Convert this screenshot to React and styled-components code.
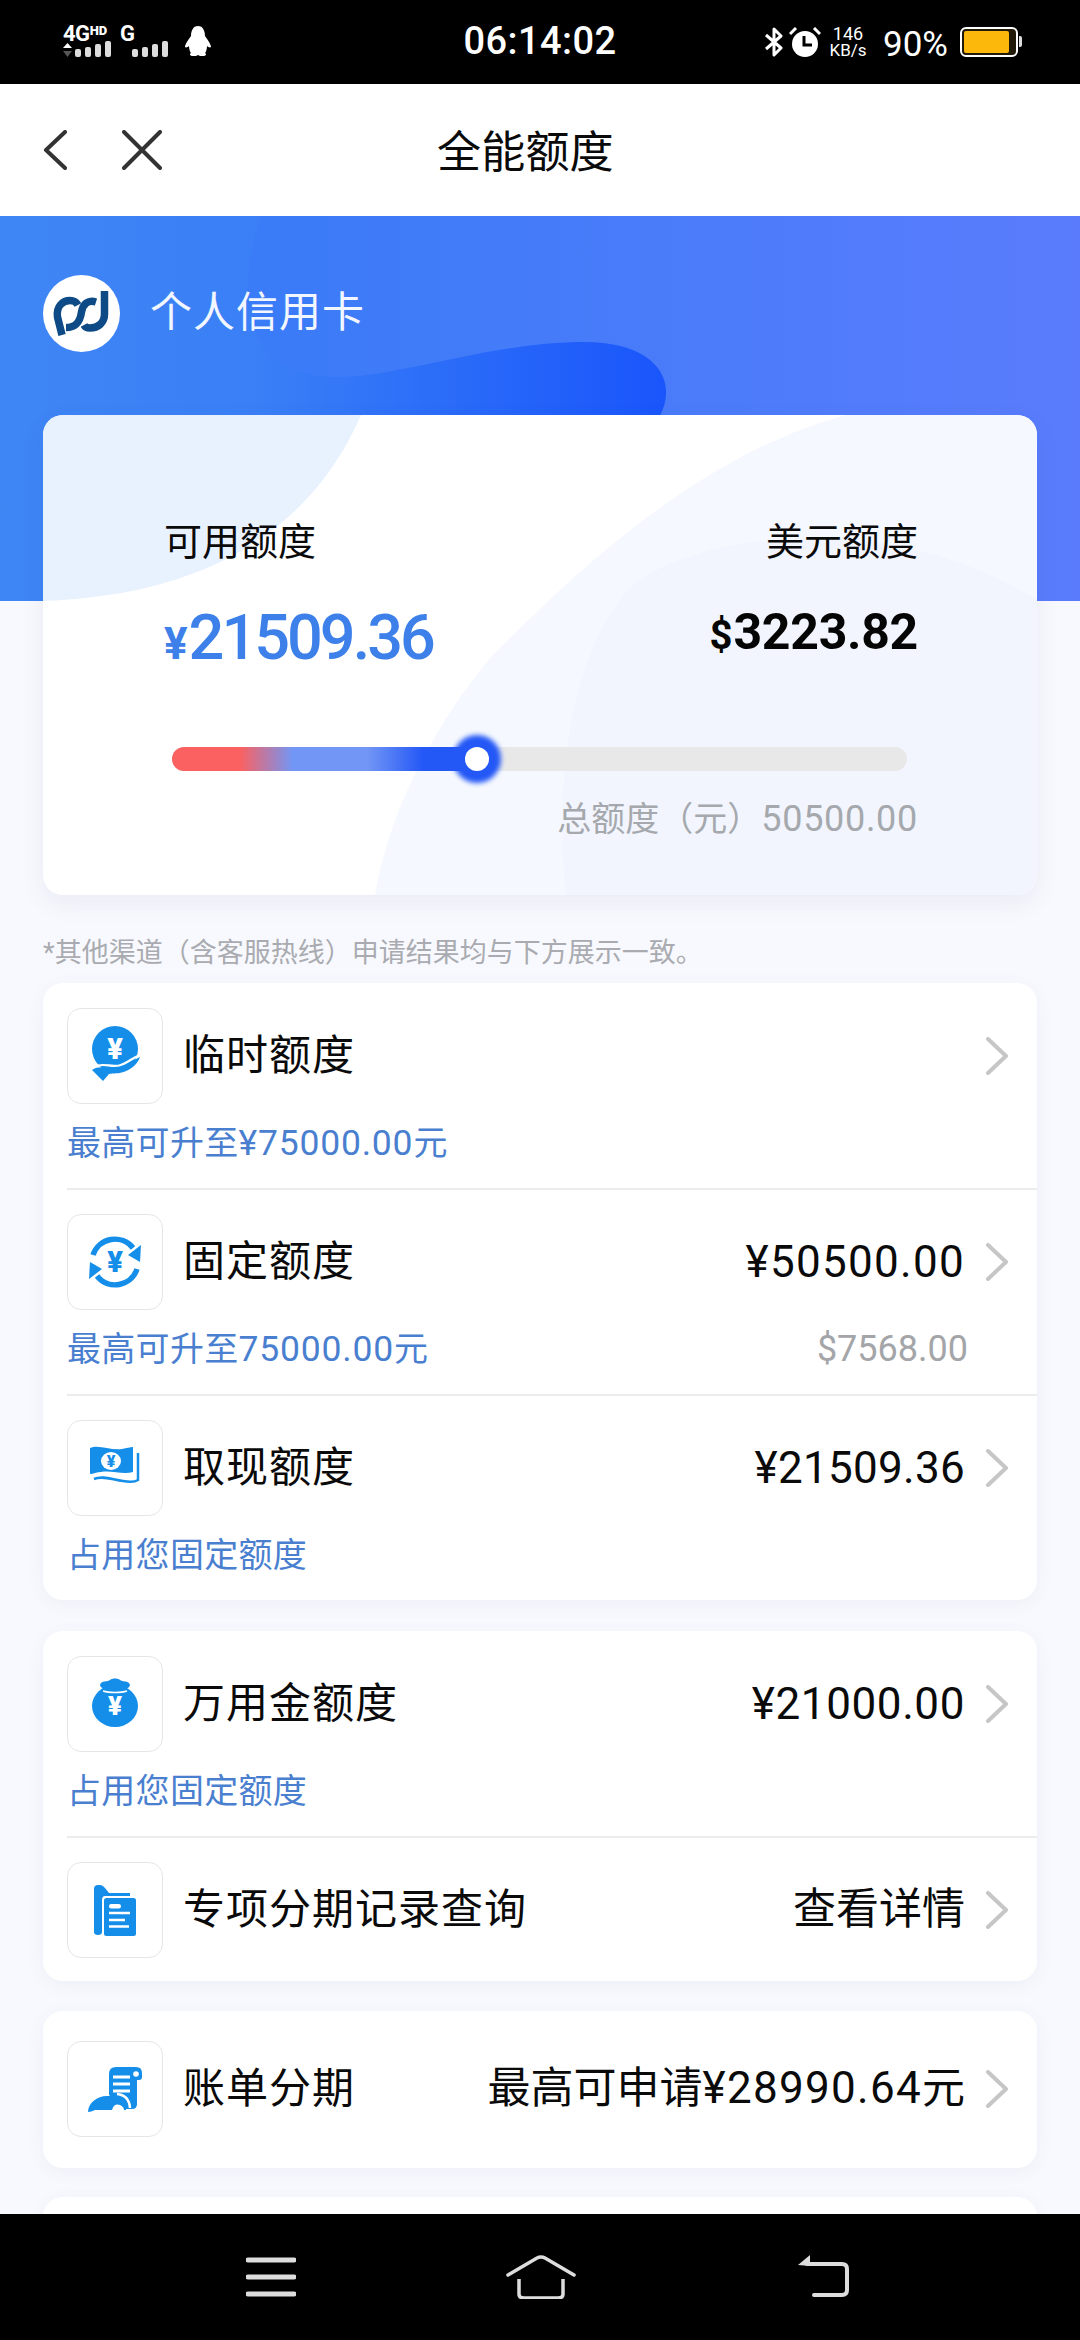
import React from "react";
import styled, { createGlobalStyle } from "styled-components";

const Global = createGlobalStyle`
  html, body { margin: 0; padding: 0; background: #000; }
  * { box-sizing: border-box; }
  body { font-family: Roboto, "Noto Sans CJK SC", sans-serif; }
`;

const Page = styled.div`
  width: 1080px; height: 2340px; display: flex; flex-direction: column;
  overflow: hidden; background: #f8f9fe; color: #0a0a0a;
`;
const StatusBar = styled.div`
  height: 84px; flex: none; background: #000; color: #fff;
  display: grid; grid-template-columns: 1fr auto 1fr; align-items: start;
`;
const StatusLeft = styled.div`display: flex; padding: 26px 0 0 63px; align-items: flex-start;`;
const Clock = styled.div`font-size: 38px; line-height: 44px; padding-top: 19px; font-weight: 500; letter-spacing: 0.4px;`;
const StatusRight = styled.div`display: flex; justify-content: flex-end; padding: 27px 58px 0 0; align-items: flex-start;`;
const SignalStack = styled.div`display: flex; flex-direction: column; width: ${p => p.$w}px;`;
const NetLabel = styled.div`
  font-size: 22px; line-height: 16px; font-weight: 700; height: 15px; display: flex; align-items: flex-start;
  padding-left: ${p => p.$pl || 0}px; letter-spacing: -0.5px;
`;
const Hd = styled.span`font-size: 13px; line-height: 10px; font-weight: 900; margin-left: 0; letter-spacing: 0;`;
const SignalSvg = styled.svg`display: block; margin-left: ${p => p.$ml || 0}px;`;
const StatusGlyph = styled.svg`display: block; flex: none; margin-right: ${p => p.$mr || 0}px;`;
const Speed = styled.div`display: flex; flex-direction: column; align-items: center; width: 36px; margin: -1px 17px 0 9px;`;
const SpeedLine = styled.span`font-size: ${p => p.$s}px; line-height: 16px; white-space: nowrap;`;
const Percent = styled.div`font-size: 35px; line-height: 32px; margin: 2px 12px 0 0;`;
const Battery = styled.div`
  width: 58px; height: 30px; border: 2px solid #fff; border-radius: 6px; padding: 2px; background: #221a08;
`;
const BatteryFill = styled.div`height: 100%; border-radius: 2px; background: #fdb90b; width: 45px;`;
const BatteryTip = styled.div`width: 3px; height: 11px; background: #ddd; border-radius: 0 2px 2px 0; margin: 9px 0 0 1px;`;

const NavBar = styled.div`
  height: 132px; flex: none; background: #fff; display: flex; align-items: center; padding-left: 43px;
`;
const NavIcon = styled.svg`display: block; margin-right: ${p => p.$mr}px; flex: none;`;
const NavTitle = styled.div`font-size: 44px; margin-left: 219px; padding-bottom: 2px; letter-spacing: 0.2px;`;

const Main = styled.main`flex: 1; min-height: 0; overflow: hidden; position: relative;`;
const Banner = styled.section`
  height: 385px; position: relative; overflow: hidden;
  background: linear-gradient(90deg, #3f86f5 0, #3a7ff6 260px, #1a56fb 660px, #1a56fb 1080px);
  padding: 59px 0 0 43px; display: flex; align-items: flex-start;
`;
const BannerArt = styled.svg`position: absolute; inset: 0; display: block;`;
const LogoDisc = styled.svg`display: block; position: relative; flex: none;`;
const BannerTitle = styled.div`
  position: relative; color: #f2f7ff; font-size: 42px; letter-spacing: 1px; line-height: 76px; margin-left: 30px;
`;

const CreditCard = styled.section`
  position: relative; margin: -186px 43px 0; height: 480px; background: #fff; border-radius: 20px; overflow: hidden;
  padding: 107px 119px 0 121px;
  box-shadow: 0 8px 24px rgba(60, 80, 130, 0.08);
`;
const CardArt = styled.svg`position: absolute; inset: 0; display: block;`;
const Amounts = styled.div`position: relative; display: flex; justify-content: space-between;`;
const AmountCol = styled.div`display: flex; flex-direction: column; align-items: ${p => p.$end ? "flex-end" : "flex-start"};`;
const AmountLabel = styled.div`font-size: 38px; line-height: 40px; white-space: nowrap;`;
const AmountValue = styled.div`
  display: flex; align-items: baseline; white-space: nowrap; margin-top: ${p => p.$mt}px;
  color: ${p => p.$c}; font-size: ${p => p.$s}px; line-height: ${p => p.$s + 6}px;
  font-weight: ${p => p.$w}; letter-spacing: ${p => p.$ls}px;
`;
const Currency = styled.span`font-size: ${p => p.$s}px; letter-spacing: 0; font-weight: 700; margin-right: 1px;`;
const Track = styled.div`
  position: relative; height: 24px; border-radius: 12px; background: #e8e8e8; margin: 68px 11px 0 8px;
`;
const TrackFill = styled.div`
  height: 100%; border-radius: 12px 0 0 12px;
  background: linear-gradient(90deg, #fb6160 0, #fb6160 68px, #7296f5 121px, #7296f5 195px, #2458f6 251px, #2458f6 100%);
`;
const Knob = styled.div`
  position: absolute; top: 0; width: 24px; height: 24px; margin-left: -12px; border-radius: 50%; background: #fff;
  box-shadow: 0 0 5px 12px #2458f6;
`;
const Total = styled.div`position: relative; text-align: right; font-size: 34px; line-height: 40px; color: #a5a8ad; margin-top: 28px;`;
const TotalNum = styled.span`font-size: 36px; letter-spacing: 0.7px;`;
const Note = styled.div`font-size: 27px; line-height: 34px; color: #a9abb0; margin: 41px 0 0 43px; white-space: nowrap;`;

const List = styled.section`
  margin: ${p => p.$mt}px 43px 0; background: #fff; border-radius: 20px; padding: ${p => p.$pt || 0}px 0 ${p => p.$pb || 0}px 24px;
  box-shadow: 0 4px 18px rgba(60, 80, 130, 0.06);
`;
const Item = styled.div`
  padding: ${p => p.$pt ?? 24}px 0 ${p => p.$pb ?? 28}px;
  border-bottom: ${p => p.$line ? "2px solid #ececec" : "0"};
`;
const Head = styled.div`display: flex; align-items: center; height: 96px; padding-right: 28px;`;
const IconBox = styled.div`
  width: 96px; height: 96px; border: 1.5px solid #e6e6e6; border-radius: 14px; background: #fff; flex: none;
  display: flex; align-items: center; justify-content: center;
`;
const BoxSvg = styled.svg`display: block; margin: -1.5px; flex: none;`;
const ItemTitle = styled.div`font-size: 42px; letter-spacing: 1px; margin-left: 20px; padding-bottom: 10px; white-space: nowrap; flex: 1;`;
const ItemValue = styled.div`
  font-size: 43px; white-space: nowrap; margin-right: 20px; padding-bottom: ${p => p.$up ? 10 : 0}px;
`;
const ValueNum = styled.span`font-size: 44px; letter-spacing: ${p => p.$ls ?? 1.3}px;`;
const Chevron = styled.svg`display: block; flex: none;`;
const SubRow = styled.div`
  display: flex; justify-content: space-between; height: 34px; margin-top: 22px; padding-right: 69px; align-items: center;
`;
const SubText = styled.div`font-size: 34px; line-height: 34px; color: #4a7fd0; letter-spacing: 0.3px; white-space: nowrap;`;
const SubNum = styled.span`font-size: 35.5px; letter-spacing: 0.8px;`;
const SubRight = styled.div`font-size: 36px; line-height: 34px; color: #a3a5a8; white-space: nowrap;`;

const BottomBar = styled.nav`
  height: 126px; flex: none; background: #000; display: flex; align-items: flex-start; gap: 210px;
  padding: 41px 0 0 246px;
`;
const NavGlyph = styled.svg`display: block; flex: none;`;

const BLUE = "#148ee9";

const ArrowRight = () => (
  <Chevron width="24" height="38" viewBox="0 0 24 38" fill="none">
    <path d="M3 2 L21 19 L3 36" stroke="#c6c6c6" strokeWidth="4" strokeLinecap="round" strokeLinejoin="round" />
  </Chevron>
);

const Yen = ({ x, y, s, c = "#fff" }) => (
  <text x={x} y={y} fontSize={s} fontWeight="900" fill={c} textAnchor="middle" fontFamily="Roboto, sans-serif">¥</text>
);

const HandCoin = () => (
  <BoxSvg width="96" height="96" viewBox="0 0 96 96">
    <circle cx="48" cy="41" r="23" fill={BLUE} />
    <Yen x="48" y="51" s="29" />
    <path d="M25 62 C33 56 42 62 52 60 C60 58 66 52 73 49 C71 56 64 61 58 63.500 C52 66 46 65 42 66 L36 73 Z" fill={BLUE} />
    <path d="M26 59 C36 54 43 59.500 52 57.500 C60 55.500 65 50 73 47" fill="none" stroke="#fff" strokeWidth="2.200" />
  </BoxSvg>
);
const Exchange = () => (
  <BoxSvg width="96" height="96" viewBox="0 0 96 96">
    <path d="M26 41 A23 23 0 0 1 66 34" fill="none" stroke={BLUE} strokeWidth="5.500" />
    <polygon points="61,41 73,48 74,31" fill={BLUE} />
    <path d="M70 55 A23 23 0 0 1 30 62" fill="none" stroke={BLUE} strokeWidth="5.500" />
    <polygon points="35,55 23,48 22,65" fill={BLUE} />
    <Yen x="48" y="58" s="29" c={BLUE} />
  </BoxSvg>
);
const Banknote = () => (
  <BoxSvg width="96" height="96" viewBox="0 0 96 96">
    <path d="M23 28 C32 24 44 31 55 29 C60 28 63 27 66 27 V52 C56 55 44 50 34 52 C30 52 26 54 23 54 Z" fill={BLUE} />
    <ellipse cx="44" cy="41" rx="10" ry="9" fill="#fff" />
    <Yen x="44" y="47" s="16" c={BLUE} />
    <path d="M27 59 C36 55 46 60 56 61 C62 62 68 62 71 60 V33" fill="none" stroke={BLUE} strokeWidth="2.500" />
  </BoxSvg>
);
const MoneyBag = () => (
  <BoxSvg width="96" height="96" viewBox="0 0 96 96">
    <ellipse cx="48" cy="50" rx="23" ry="21" fill={BLUE} />
    <path d="M33 29 C34 24 41 26 43 24 C45 22 51 22 53 24 C55 26 62 24 63 29 C63 32 58 34 48 34 C38 34 33 32 33 29 Z" fill={BLUE} />
    <path d="M36 35 C42 37 54 37 60 35" stroke="#fff" strokeWidth="1.500" fill="none" />
    <Yen x="48" y="59" s="26" />
  </BoxSvg>
);
const FolderDoc = () => (
  <BoxSvg width="96" height="96" viewBox="0 0 96 96">
    <path d="M27 27 Q27 23 31 23 H33 Q36 23 38 26 L42 31 H63 V34 H38 Q35 34 35 38 V70 Q35 73 31 73 Q27 73 27 70 Z" fill={BLUE} />
    <rect x="37" y="36" width="32" height="38" rx="2.500" fill={BLUE} />
    <rect x="42" y="42" width="12" height="4.500" rx="2.200" fill="#fff" />
    <path d="M42 51 H63 M42 58 H58 M42 64.500 H62" stroke="#fff" strokeWidth="2.500" />
  </BoxSvg>
);
const ScrollHand = () => (
  <BoxSvg width="96" height="96" viewBox="0 0 96 96">
    <path d="M42 33 Q42 26 49 26 H69 Q75 26 75 32 V36 Q75 39 72 39 H70 V63 Q70 68 65 68 H58 L42 54 Z" fill={BLUE} />
    <circle cx="69" cy="33" r="2.800" fill="#fff" />
    <path d="M46 36 H63 M46 43 H63 M46 50 H63" stroke="#fff" strokeWidth="3" />
    <path d="M50 53 Q62 54 63 67" fill="none" stroke="#fff" strokeWidth="2.500" />
    <path d="M21 71 C21 62 30 55 40 55 H48 C54 56 59 62 59 69 H28 Q24 71 21 71 Z" fill={BLUE} />
    <path d="M45 69 Q47 62 53 64 Q57 66 57 69 Z" fill="#fff" />
  </BoxSvg>
);

const Row = ({ icon, title, value, up, sub, subRight, line, pt, pb }) => (
  <Item $line={line} $pt={pt} $pb={pb}>
    <Head>
      <IconBox>{icon}</IconBox>
      <ItemTitle>{title}</ItemTitle>
      {value && <ItemValue $up={up}>{value}</ItemValue>}
      <ArrowRight />
    </Head>
    {sub && (
      <SubRow>
        <SubText>{sub}</SubText>
        {subRight && <SubRight>{subRight}</SubRight>}
      </SubRow>
    )}
  </Item>
);

const Bars = () => (
  <g>
    <rect x="0" y="8" width="6" height="8" rx="2" fill="#ddd" />
    <rect x="10" y="6" width="6" height="10" rx="2" fill="#ddd" />
    <rect x="20" y="3" width="6" height="13" rx="2" fill="#ddd" />
    <rect x="30" y="0" width="6" height="16" rx="2" fill="#ddd" />
  </g>
);

export default function App() {
  return (
    <Page>
      <Global />
      <StatusBar>
        <StatusLeft>
          <SignalStack $w={57}>
            <NetLabel>4G<Hd>HD</Hd></NetLabel>
            <SignalSvg width="48" height="18" viewBox="0 0 48 18">
              <polygon points="0,7 4.500,2 9,7" fill="#fff" />
              <polygon points="0,10 4.500,16 9,10" fill="#555" />
              <g transform="translate(12,0)"><Bars /></g>
            </SignalSvg>
          </SignalStack>
          <SignalStack $w={65}>
            <NetLabel>G</NetLabel>
            <SignalSvg $ml={12} width="48" height="18" viewBox="0 0 48 18"><Bars /></SignalSvg>
          </SignalStack>
          <StatusGlyph width="26" height="31" viewBox="0 0 26 31">
            <path d="M13 0 C18 0 20 5 20 10 C22 13 26 18 26 21 C25 22 23 21 22 20 C22 23 21 26 20 27 C22 28 21 30 18 30 H15 L13 29 L11 30 H8 C5 30 4 28 6 27 C5 26 4 23 4 20 C3 21 1 22 0 21 C0 18 4 13 6 10 C6 5 8 0 13 0 Z" fill="#fff" />
          </StatusGlyph>
        </StatusLeft>
        <Clock>06:14:02</Clock>
        <StatusRight>
          <StatusGlyph $mr={6} width="18" height="30" viewBox="0 0 18 30" fill="none">
            <path d="M1 8 L16 21 L9 28 V2 L16 9 L1 22" stroke="#fff" strokeWidth="3" strokeLinejoin="round" />
          </StatusGlyph>
          <StatusGlyph width="32" height="30" viewBox="0 0 32 30">
            <circle cx="16" cy="17" r="13" fill="#fff" />
            <path d="M15 9 V18 H23" stroke="#000" strokeWidth="3" fill="none" />
            <path d="M1 7 L7 1 M31 7 L25 1" stroke="#fff" strokeWidth="3" />
          </StatusGlyph>
          <Speed>
            <SpeedLine $s={18}>146</SpeedLine>
            <SpeedLine $s={17}>KB/s</SpeedLine>
          </Speed>
          <Percent>90%</Percent>
          <Battery><BatteryFill /></Battery>
          <BatteryTip />
        </StatusRight>
      </StatusBar>

      <NavBar>
        <NavIcon $mr={55} width="24" height="40" viewBox="0 0 24 40" fill="none">
          <path d="M22 2 L3 20 L22 38" stroke="#333" strokeWidth="4" strokeLinecap="round" strokeLinejoin="round" />
        </NavIcon>
        <NavIcon $mr={56} width="40" height="40" viewBox="0 0 40 40" fill="none">
          <path d="M2 2 L38 38 M38 2 L2 38" stroke="#333" strokeWidth="4" strokeLinecap="round" />
        </NavIcon>
        <NavTitle>全能额度</NavTitle>
      </NavBar>

      <Main>
        <Banner>
          <BannerArt width="1080" height="385" viewBox="0 0 1080 385">
            <defs>
              <linearGradient id="bannerLight" x1="262" x2="1080" y1="0" y2="0" gradientUnits="userSpaceOnUse">
                <stop offset="0" stopColor="#3a7bf7" />
                <stop offset="1" stopColor="#5a7cfc" />
              </linearGradient>
            </defs>
            <path d="M262 0 C236 70 236 161 337 161 C400 161 490 126 585 126 C650 126 680 160 660 200 L660 385 H1080 V0 Z" fill="url(#bannerLight)" />
          </BannerArt>
          <LogoDisc width="77" height="77" viewBox="0 0 77 77" fill="none">
            <circle cx="38.500" cy="38.500" r="38.500" fill="#fff" />
            <path d="M19 60 L14.500 42 C13 31 20 25.500 27 25.500 C31 25.500 33.500 27 35 30" stroke="#0e4a85" strokeWidth="7.500" />
            <path d="M53 27 C45 24.500 40 29 38.500 37 C37 47 33 52.500 23 52.500" stroke="#0e4a85" strokeWidth="7.500" />
            <path d="M61.500 16 V39 C61.500 48 55 53 47 53 C44 53 42 52 41 50" stroke="#0e4a85" strokeWidth="7.500" />
          </LogoDisc>
          <BannerTitle>个人信用卡</BannerTitle>
        </Banner>

        <CreditCard>
          <CardArt width="994" height="480" viewBox="0 0 994 480">
            <path d="M0 0 H318 C270 110 170 180 0 186 Z" fill="#e8f1fe" />
            <path d="M804 0 C650 40 520 170 449 241 C390 310 345 400 332 480 H994 V0 Z" fill="#f5f8fe" />
            <path d="M523 480 C510 360 530 230 590 170 C660 115 850 95 994 185 V480 Z" fill="#f2f5fd" />
          </CardArt>
          <Amounts>
            <AmountCol>
              <AmountLabel>可用额度</AmountLabel>
              <AmountValue $c="#3d80ea" $s={63} $w={500} $ls={-3} $mt={41}>
                <Currency $s={44}>¥</Currency>21509.36
              </AmountValue>
            </AmountCol>
            <AmountCol $end>
              <AmountLabel>美元额度</AmountLabel>
              <AmountValue $c="#050505" $s={50} $w={700} $ls={-0.3} $mt={42}>
                <Currency $s={40}>$</Currency>3223.82
              </AmountValue>
            </AmountCol>
          </Amounts>
          <Track>
            <TrackFill style={{ width: 305 }} />
            <Knob style={{ left: 305 }} />
          </Track>
          <Total>总额度（元）<TotalNum>50500.00</TotalNum></Total>
        </CreditCard>

        <Note>*其他渠道（含客服热线）申请结果均与下方展示一致。</Note>

        <List $mt={13} $pt={1}>
          <Row line icon={<HandCoin />} title="临时额度" sub={<>最高可升至<SubNum>¥75000.00</SubNum>元</>} />
          <Row line icon={<Exchange />} title="固定额度" value={<ValueNum>¥50500.00</ValueNum>} sub={<>最高可升至<SubNum>75000.00</SubNum>元</>} subRight="$7568.00" />
          <Row icon={<Banknote />} title="取现额度" value={<ValueNum $ls={0.3}>¥21509.36</ValueNum>} sub="占用您固定额度" />
        </List>

        <List $mt={31} $pt={1} $pb={23}>
          <Row line icon={<MoneyBag />} title="万用金额度" value={<ValueNum $ls={0.6}>¥21000.00</ValueNum>} sub="占用您固定额度" />
          <Row icon={<FolderDoc />} title="专项分期记录查询" value="查看详情" up pb={0} />
        </List>

        <List $mt={30} $pb={31}>
          <Row icon={<ScrollHand />} title="账单分期" value={<>最高可申请<ValueNum>¥28990.64</ValueNum>元</>} up pt={30} pb={0} />
        </List>

        <List $mt={29}>
          <Item $pt={30} $pb={0}><Head /></Item>
        </List>
      </Main>

      <BottomBar>
        <NavGlyph width="50" height="44" viewBox="0 0 50 44">
          <path d="M2 5 H48 M2 22 H48 M2 39 H48" stroke="#ddd" strokeWidth="5" strokeLinecap="round" />
        </NavGlyph>
        <NavGlyph width="70" height="44" viewBox="0 0 70 44" fill="none">
          <path d="M2 20 L31 3 Q35 1 39 3 L68 20" stroke="#ddd" strokeWidth="3.500" strokeLinecap="round" />
          <path d="M13 24 V39 Q13 43 18 43 H52 Q57 43 57 39 V24" stroke="#ddd" strokeWidth="3.500" />
        </NavGlyph>
        <NavGlyph width="63" height="44" viewBox="0 0 63 44" fill="none">
          <polygon points="12,10 24,0 24,11" fill="#ddd" />
          <path d="M21 9 H56 Q61 9 61 14 V35 Q61 40 56 40 H28" stroke="#ddd" strokeWidth="4" strokeLinecap="round" />
        </NavGlyph>
      </BottomBar>
    </Page>
  );
}
